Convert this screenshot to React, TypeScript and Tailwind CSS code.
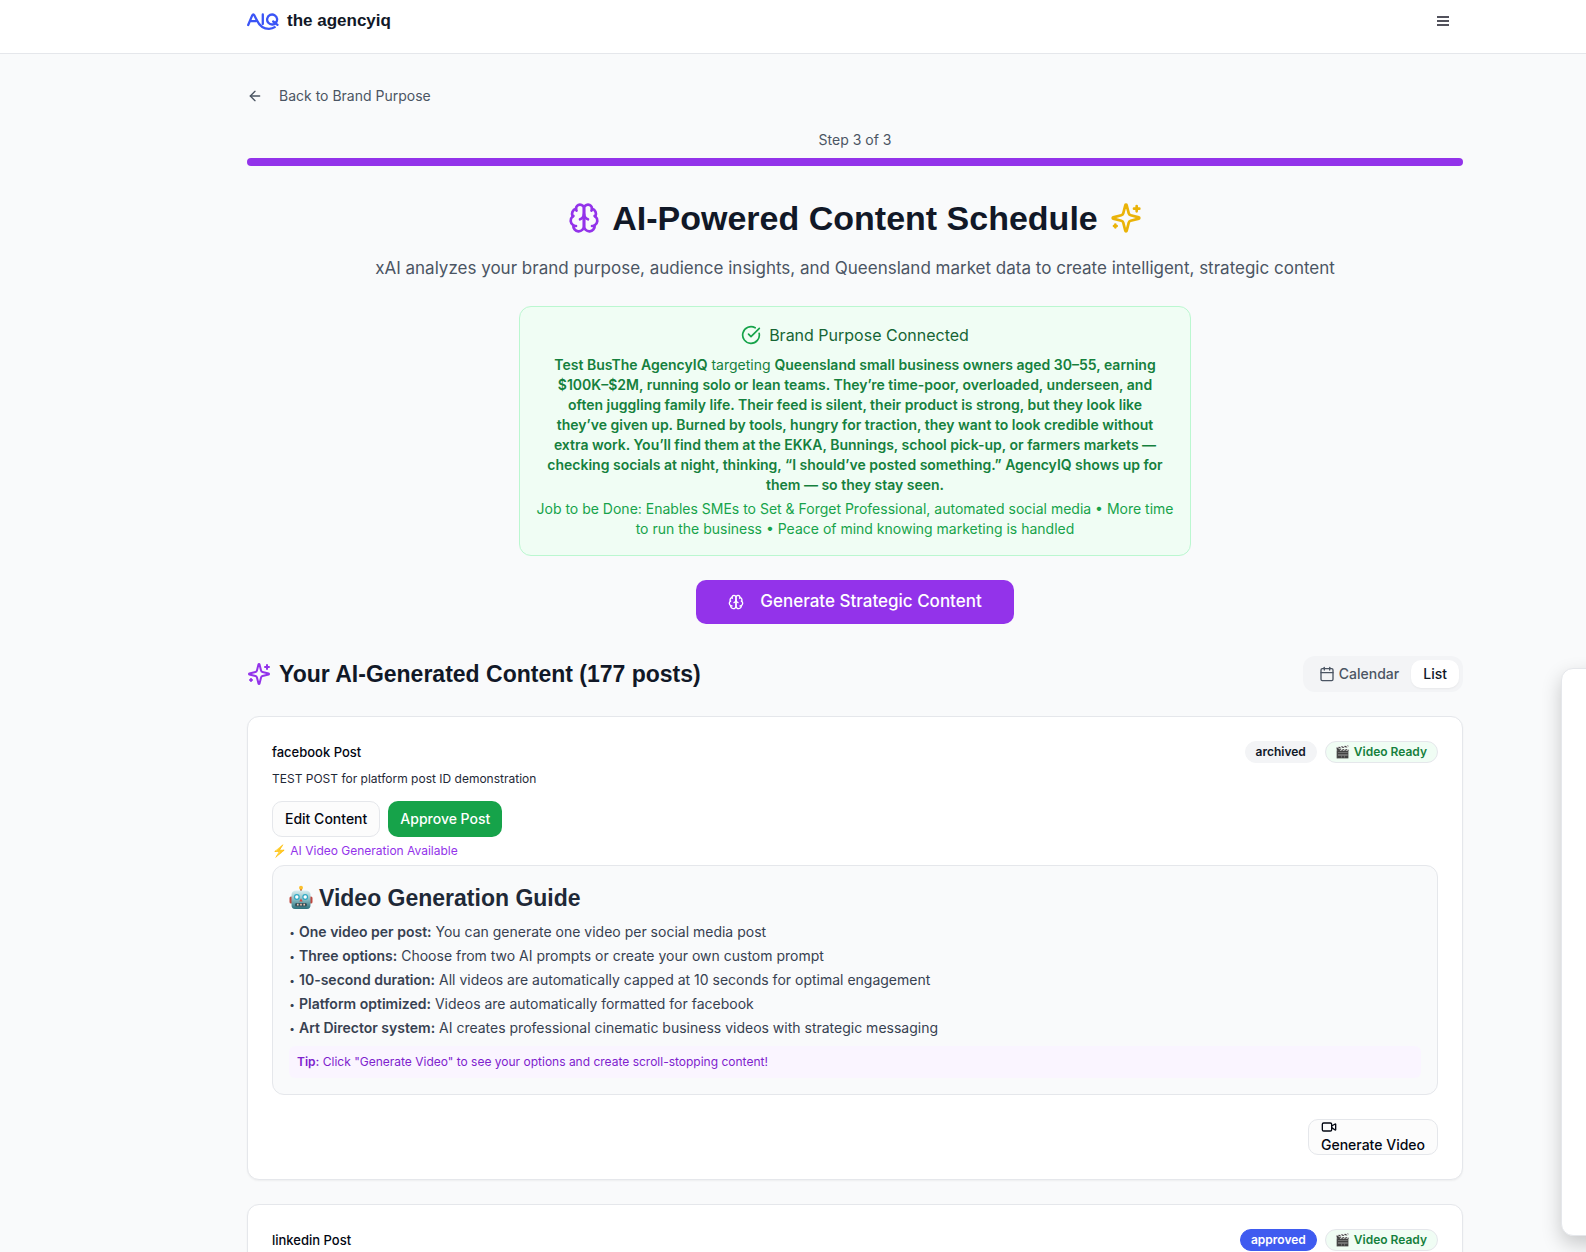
import React from "react";
import { ArrowLeft, Calendar, CheckCircle, Video } from "lucide-react";

const sans = "font-['Inter','Noto_Color_Emoji',sans-serif]";
const display = "font-['Liberation_Sans','Noto_Color_Emoji',sans-serif]";

function Logo() {
  return (
    <svg width="32" height="17" viewBox="0 0 32 17" fill="none" stroke="#3b55f6" strokeWidth="2.3" strokeLinecap="round" aria-hidden="true">
      <path d="M1.200 12 5.200 2.400Q6.300.2 7.400 2.400L10 7.500C12.600 13 17 15.800 22 15.800c2.600 0 4.500-.7 5.700-1.600" />
      <path d="M4 8.200h5M15.800 1.400v9.600" />
      <path d="M28.500 10.200a5 5 0 1 0-3 1.300c1.700 0 2.500-.5 3-1.300ZM26.200 8.500l4.300 3.400" />
    </svg>
  );
}

function Brain({ className }: { className: string }) {
  return (
    <svg className={className} viewBox="0 0 24 24" fill="none" stroke="currentColor" strokeWidth="2" strokeLinecap="round" strokeLinejoin="round" aria-hidden="true">
      <path d="M12 5a3 3 0 1 0-5.997.125 4 4 0 0 0-2.526 5.77 4 4 0 0 0 .556 6.588A4 4 0 1 0 12 18Z" />
      <path d="M12 5a3 3 0 1 1 5.997.125 4 4 0 0 1 2.526 5.77 4 4 0 0 1-.556 6.588A4 4 0 1 1 12 18Z" />
      <path d="M15 13a4.500 4.500 0 0 1-3-4 4.500 4.500 0 0 1-3 4" />
      <path d="M17.599 6.500a3 3 0 0 0 .399-1.375M6.003 5.125A3 3 0 0 0 6.401 6.500" />
      <path d="M3.477 10.896a4 4 0 0 1 .585-.396M19.938 10.500a4 4 0 0 1 .585.396" />
      <path d="M6 18a4 4 0 0 1-1.967-.516M19.967 17.484A4 4 0 0 1 18 18" />
    </svg>
  );
}

function Sparkles({ className }: { className: string }) {
  return (
    <svg className={className} viewBox="0 0 24 24" fill="none" stroke="currentColor" strokeWidth="2" strokeLinecap="round" strokeLinejoin="round" aria-hidden="true">
      <path d="M9.937 15.500A2 2 0 0 0 8.500 14.063l-6.135-1.582a.5.5 0 0 1 0-.962L8.500 9.936A2 2 0 0 0 9.937 8.500l1.582-6.135a.5.5 0 0 1 .963 0L14.063 8.500A2 2 0 0 0 15.500 9.937l6.135 1.581a.5.5 0 0 1 0 .964L15.500 14.063a2 2 0 0 0-1.437 1.437l-1.582 6.135a.5.5 0 0 1-.963 0z" />
      <path d="M20 3v4M22 5h-4M4 17v2M5 18H3" />
    </svg>
  );
}

function Robot() {
  return (
    <svg width="24" height="26" viewBox="0 0 24 26" aria-hidden="true">
      <defs>
        <linearGradient id="robot-face" x1="0" y1="0" x2="0" y2="1">
          <stop offset="0" stopColor="#d9eef0" />
          <stop offset="0.5" stopColor="#86b9c0" />
          <stop offset="1" stopColor="#2b6f7b" />
        </linearGradient>
      </defs>
      <rect x="11" y="3" width="2" height="4" fill="#b0523d" />
      <circle cx="12" cy="2.800" r="2" fill="#fbc02d" />
      <rect x="0.500" y="11.500" width="3.500" height="7" rx="1.500" fill="#c0473e" />
      <rect x="20" y="11.500" width="3.500" height="7" rx="1.500" fill="#c0473e" />
      <path d="M2.500 10q0-4.500 5-4.500h9q5 0 5 4.500v10q0 4-3.500 4H6q-3.500 0-3.500-4z" fill="url(#robot-face)" />
      <circle cx="7.800" cy="12" r="2.900" fill="#2fa9c4" />
      <circle cx="16.200" cy="12" r="2.900" fill="#2fa9c4" />
      <circle cx="7.800" cy="12" r="1.700" fill="#fff" />
      <circle cx="16.200" cy="12" r="1.700" fill="#fff" />
      <path d="m12 13.500 1.700 3h-3.400z" fill="#d9423c" />
      <rect x="6" y="18" width="12" height="3.400" rx="1.500" fill="#35535c" />
      <path d="M8 19.700h1.600M11.200 19.700h1.600M14.400 19.700H16" stroke="#f5c9b6" strokeWidth="1.800" />
    </svg>
  );
}

function VideoReadyBadge() {
  return (
    <span className="rounded-full border border-gray-200 bg-[#f0fdf4] px-2.5 text-xs leading-5 font-semibold text-[#15803d]">
      🎬 Video Ready
    </span>
  );
}

function CardHeading({ title, status, tone }: { title: string; status: string; tone: string }) {
  return (
    <div className="flex h-5.5 items-center justify-between">
      <h3 className="text-[13px] leading-5.5 font-medium text-gray-950">{title}</h3>
      <div className="flex items-center gap-2">
        <span className={`rounded-full border px-2.5 text-xs leading-5 font-semibold ${tone}`}>{status}</span>
        <VideoReadyBadge />
      </div>
    </div>
  );
}

const guide: [string, string][] = [
  ["One video per post:", "You can generate one video per social media post"],
  ["Three options:", "Choose from two AI prompts or create your own custom prompt"],
  ["10-second duration:", "All videos are automatically capped at 10 seconds for optimal engagement"],
  ["Platform optimized:", "Videos are automatically formatted for facebook"],
  ["Art Director system:", "AI creates professional cinematic business videos with strategic messaging"],
];

export default function App() {
  return (
    <div className={`relative h-screen overflow-hidden bg-[#f9fafb] text-[#111827] ${sans}`}>
      <header className="border-b border-gray-200 bg-white pl-31">
        <div className="mx-auto flex max-w-7xl items-start justify-between px-8 pt-2 pb-[19px]">
          <a href="#home" className="flex items-center gap-2">
            <Logo />
            <span className={`text-[17px] leading-[26px] font-bold ${display}`}>the agencyiq</span>
          </a>
          <button type="button" aria-label="Menu" className="mr-3.5 flex h-[26px] w-3 flex-col justify-center gap-0.5">
            <span className="h-0.5 w-full bg-zinc-600" />
            <span className="h-0.5 w-full bg-zinc-600" />
            <span className="h-0.5 w-full bg-zinc-600" />
          </button>
        </div>
      </header>

      <main className="pl-31">
        <div className="mx-auto max-w-7xl px-8 pt-8">
          <a href="#brand-purpose" className="inline-flex h-5 items-center gap-4 text-sm text-[#4b5563]">
            <ArrowLeft className="size-4" />
            Back to Brand Purpose
          </a>

          <p className="mt-5 text-center text-sm text-[#4b5563]">Step 3 of 3</p>
          <div role="progressbar" aria-label="Step 3 of 3" aria-valuenow={100} className="mt-2 h-2 rounded-full bg-[#9333ea]" />

          <section className="mt-8 flex flex-col items-center">
            <h1 className={`flex items-center gap-3 text-[34px] leading-10 font-bold ${display}`}>
              <Brain className="size-8 text-[#9333ea]" />
              AI-Powered Content Schedule
              <Sparkles className="size-8 text-[#eab308]" />
            </h1>
            <p className="mt-4 text-center text-[17px] leading-7 text-[#4b5563]">
              xAI analyzes your brand purpose, audience insights, and Queensland market data to create intelligent, strategic content
            </p>

            <div className="mt-6 w-full max-w-2xl rounded-xl border border-[#bbf7d0] bg-[#f0fdf4] p-4 text-center text-sm">
              <div className="flex items-center justify-center gap-2 text-base text-[#166534]">
                <CheckCircle className="size-5 text-[#16a34a]" />
                Brand Purpose Connected
              </div>
              <p className="mt-2 px-1.5 text-[#15803d]">
                <strong className="font-semibold">Test BusThe AgencyIQ</strong> targeting{" "}
                <strong className="font-semibold">
                  Queensland small business owners aged 30–55, earning $100K–$2M, running solo or lean teams. They’re time-poor,
                  overloaded, underseen, and often juggling family life. Their feed is silent, their product is strong, but they look
                  like they’ve given up. Burned by tools, hungry for traction, they want to look credible without extra work. You’ll
                  find them at the EKKA, Bunnings, school pick-up, or farmers markets — checking socials at night, thinking, “I
                  should’ve posted something.” AgencyIQ shows up for them — so they stay seen.
                </strong>
              </p>
              <p className="mt-1 text-[#16a34a]">
                Job to be Done: Enables SMEs to Set &amp; Forget Professional, automated social media • More time to run the business •
                Peace of mind knowing marketing is handled
              </p>
            </div>

            <button type="button" className="mt-6 flex h-11 items-center gap-4 rounded-[10px] bg-[#9333ea] px-8 text-[17px] font-medium text-white">
              <Brain className="size-4" />
              Generate Strategic Content
            </button>
          </section>

          <div className="mt-8 flex items-center justify-between">
            <h2 className={`flex items-center gap-2 text-[23px] leading-8 font-bold ${display}`}>
              <Sparkles className="size-6 text-[#9333ea]" />
              Your AI-Generated Content (177 posts)
            </h2>
            <div className="flex rounded-xl bg-[#f3f4f6] p-1 text-sm font-medium">
              <button type="button" className="flex h-7 items-center gap-1 px-3 text-[#4b5563]">
                <Calendar className="size-4" />
                Calendar
              </button>
              <button type="button" className="h-7 rounded-[10px] bg-white px-3 text-[#111827] shadow-xs">
                List
              </button>
            </div>
          </div>

          <article className="mt-6 rounded-xl border border-gray-200 bg-white p-6 shadow-xs">
            <CardHeading title="facebook Post" status="archived" tone="border-gray-100 bg-gray-100 text-gray-900" />
            <p className="mt-1.5 text-xs leading-5 text-[#1f2937]">TEST POST for platform post ID demonstration</p>
            <div className="mt-3 flex gap-2 text-sm font-medium">
              <button type="button" className="h-9 rounded-[10px] border border-gray-200 bg-[#fcfcfc] px-3 text-gray-950">
                Edit Content
              </button>
              <button type="button" className="h-9 rounded-[10px] bg-[#16a34a] px-3 text-white">
                Approve Post
              </button>
            </div>
            <p className="mt-1.5 text-xs text-[#9333ea]">⚡ AI Video Generation Available</p>

            <section className="mt-1.5 rounded-xl border border-gray-200 bg-[#f9fafb] p-4">
              <h4 className={`flex items-center gap-1.5 text-[23px] leading-8 font-bold text-[#1f2937] ${display}`}>
                <Robot />
                Video Generation Guide
              </h4>
              <ul className="mt-2 space-y-1 text-sm text-[#374151]">
                {guide.map(([label, text]) => (
                  <li key={label} className="flex items-center gap-1">
                    <span className="w-1.5 text-center text-[10px] leading-5">•</span>
                    <span>
                      <strong className="font-semibold">{label}</strong> {text}
                    </span>
                  </li>
                ))}
              </ul>
              <p className="mt-2 rounded-md bg-[#faf5ff] p-2 text-xs text-[#7e22ce]">
                <strong className="font-semibold">Tip:</strong> Click "Generate Video" to see your options and create scroll-stopping
                content!
              </p>
            </section>

            <div className="mt-6 flex justify-end">
              <button
                type="button"
                className="flex h-9 flex-col items-start justify-center rounded-[10px] border border-gray-200 bg-[#fcfcfc] px-3 text-sm font-medium text-gray-950"
              >
                <Video className="size-4 shrink-0" />
                Generate Video
              </button>
            </div>
          </article>

          <article className="mt-6 rounded-xl border border-gray-200 bg-white p-6 shadow-xs">
            <CardHeading title="linkedin Post" status="approved" tone="border-[#3f5bf0] bg-[#3f5bf0] text-white" />
          </article>
        </div>
      </main>

      <aside
        aria-label="Assistant"
        className="absolute -right-40 bottom-4 h-[568px] w-[185px] rounded-xl border border-gray-200 bg-white shadow-[0_8px_20px_rgba(0,0,0,0.2)]"
      />
    </div>
  );
}
